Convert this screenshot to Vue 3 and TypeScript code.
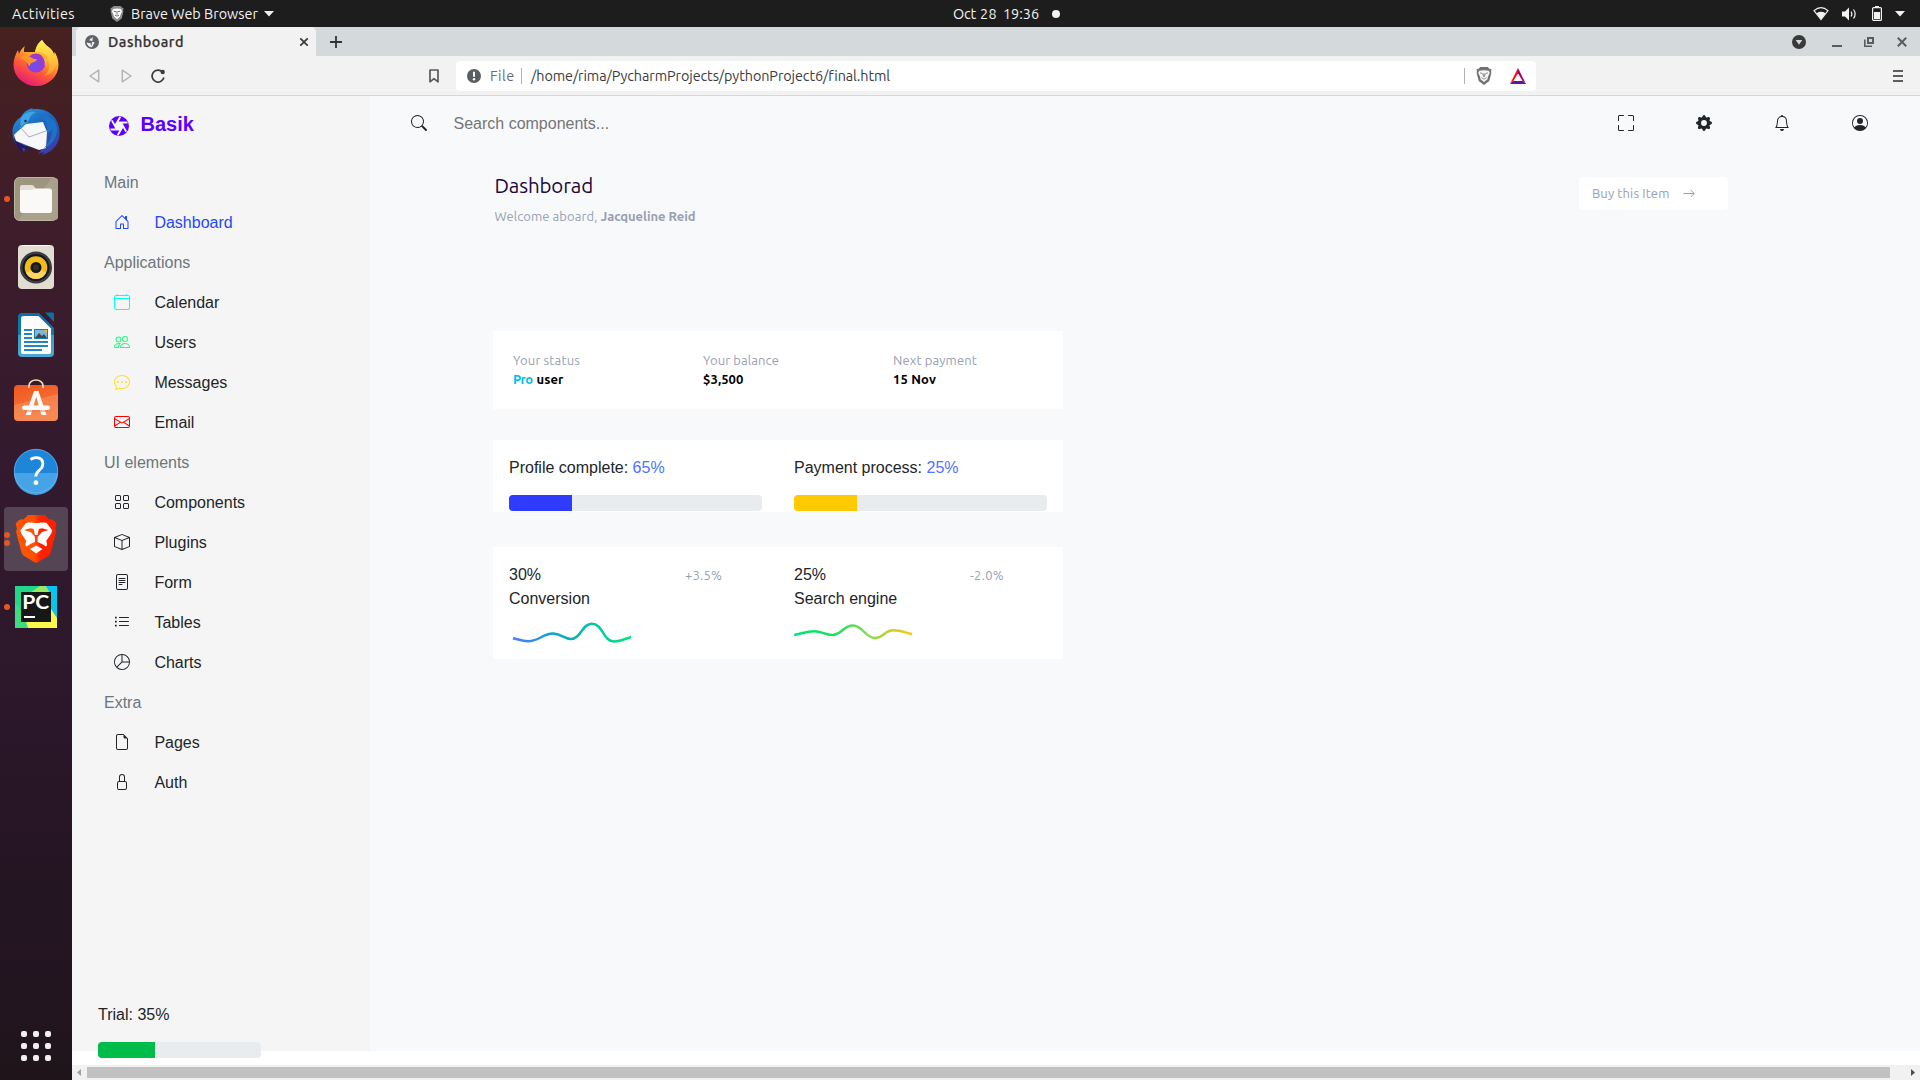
<script setup lang="ts">
interface NavItem {
  label: string
  icon?: string
  color?: string
  heading?: boolean
}

const icons: Record<string, string> = {
  house: 'M8.354 1.146a.5.5 0 0 0-.708 0l-6 6A.5.5 0 0 0 1.5 7.5v7a.5.5 0 0 0 .5.5h4.5a.5.5 0 0 0 .5-.5v-4h2v4a.5.5 0 0 0 .5.5H14a.5.5 0 0 0 .5-.5v-7a.5.5 0 0 0-.146-.354L13 5.793V2.5a.5.5 0 0 0-.5-.5h-1a.5.5 0 0 0-.5.5v1.293L8.354 1.146zM2.5 14V7.707l5.5-5.5 5.5 5.5V14H10v-4a.5.5 0 0 0-.5-.5h-3a.5.5 0 0 0-.5.5v4H2.5z',
  calendar: 'M3.5 0a.5.5 0 0 1 .5.5V1h8V.5a.5.5 0 0 1 1 0V1h1a2 2 0 0 1 2 2v11a2 2 0 0 1-2 2H2a2 2 0 0 1-2-2V3a2 2 0 0 1 2-2h1V.5a.5.5 0 0 1 .5-.5zM1 5v9a1 1 0 0 0 1 1h12a1 1 0 0 0 1-1V5H1zM2 2a1 1 0 0 0-1 1v1h14V3a1 1 0 0 0-1-1H2z',
  people: 'M15 14s1 0 1-1-1-4-5-4-5 3-5 4 1 1 1 1h8zm-7.978-1A.261.261 0 0 1 7 12.996c.001-.264.167-1.03.76-1.72C8.312 10.629 9.282 10 11 10c1.717 0 2.687.63 3.24 1.276.593.69.758 1.457.76 1.72l-.008.002a.274.274 0 0 1-.014.002H7.022zM11 7a2 2 0 1 0 0-4 2 2 0 0 0 0 4zm3-2a3 3 0 1 1-6 0 3 3 0 0 1 6 0zM6.936 9.28a5.88 5.88 0 0 0-1.23-.247A7.35 7.35 0 0 0 5 9c-4 0-5 3-5 4 0 .667.333 1 1 1h4.216A2.238 2.238 0 0 1 5 13c0-1.01.377-2.042 1.09-2.904.243-.294.526-.569.846-.816zM4.92 10A5.493 5.493 0 0 0 4 13H1c0-.26.164-1.03.76-1.724.545-.636 1.492-1.256 3.16-1.275zM1.5 5.5a3 3 0 1 1 6 0 3 3 0 0 1-6 0zm3-2a2 2 0 1 0 0 4 2 2 0 0 0 0-4z',
  chat: 'M5 8a1 1 0 1 1-2 0 1 1 0 0 1 2 0zm4 0a1 1 0 1 1-2 0 1 1 0 0 1 2 0zm3 1a1 1 0 1 0 0-2 1 1 0 0 0 0 2zM2.165 15.803l.02-.004c1.83-.363 2.948-.842 3.468-1.105A9.06 9.06 0 0 0 8 15c4.418 0 8-3.134 8-7s-3.582-7-8-7-8 3.134-8 7c0 1.76.743 3.37 1.97 4.6a10.437 10.437 0 0 1-.524 2.318l-.003.011a10.722 10.722 0 0 1-.244.637c-.079.186.074.394.273.362a21.673 21.673 0 0 0 .693-.125zm.8-3.108a1 1 0 0 0-.287-.801C1.618 10.83 1 9.468 1 8c0-3.192 3.004-6 7-6s7 2.808 7 6c0 3.193-3.004 6-7 6a8.06 8.06 0 0 1-2.088-.272 1 1 0 0 0-.711.074c-.387.196-1.24.57-2.634.893a10.97 10.97 0 0 0 .398-2z',
  envelope: 'M0 4a2 2 0 0 1 2-2h12a2 2 0 0 1 2 2v8a2 2 0 0 1-2 2H2a2 2 0 0 1-2-2V4Zm2-1a1 1 0 0 0-1 1v.217l7 4.2 7-4.2V4a1 1 0 0 0-1-1H2Zm13 2.383-4.708 2.825L15 11.105V5.383Zm-.034 6.876-5.64-3.471L8 9.583l-1.326-.795-5.64 3.47A1 1 0 0 0 2 13h12a1 1 0 0 0 .966-.741ZM1 11.105l4.708-2.897L1 5.383v5.722Z',
  grid: 'M1 2.5A1.5 1.5 0 0 1 2.5 1h3A1.5 1.5 0 0 1 7 2.5v3A1.5 1.5 0 0 1 5.5 7h-3A1.5 1.5 0 0 1 1 5.5v-3zM2.5 2a.5.5 0 0 0-.5.5v3a.5.5 0 0 0 .5.5h3a.5.5 0 0 0 .5-.5v-3a.5.5 0 0 0-.5-.5h-3zm6.5.5A1.5 1.5 0 0 1 10.5 1h3A1.5 1.5 0 0 1 15 2.5v3A1.5 1.5 0 0 1 13.5 7h-3A1.5 1.5 0 0 1 9 5.5v-3zm1.5-.5a.5.5 0 0 0-.5.5v3a.5.5 0 0 0 .5.5h3a.5.5 0 0 0 .5-.5v-3a.5.5 0 0 0-.5-.5h-3zM1 10.5A1.5 1.5 0 0 1 2.5 9h3A1.5 1.5 0 0 1 7 10.5v3A1.5 1.5 0 0 1 5.5 15h-3A1.5 1.5 0 0 1 1 13.5v-3zm1.5-.5a.5.5 0 0 0-.5.5v3a.5.5 0 0 0 .5.5h3a.5.5 0 0 0 .5-.5v-3a.5.5 0 0 0-.5-.5h-3zm6.5.5A1.5 1.5 0 0 1 10.5 9h3a1.5 1.5 0 0 1 1.5 1.5v3a1.5 1.5 0 0 1-1.5 1.5h-3A1.5 1.5 0 0 1 9 13.5v-3zm1.5-.5a.5.5 0 0 0-.5.5v3a.5.5 0 0 0 .5.5h3a.5.5 0 0 0 .5-.5v-3a.5.5 0 0 0-.5-.5h-3z',
  box: 'M8.186 1.113a.5.5 0 0 0-.372 0L1.846 3.5 8 5.961 14.154 3.5 8.186 1.113zM15 4.239l-6.5 2.6v7.922l6.5-2.6V4.24zM7.5 14.762V6.838L1 4.239v7.923l6.5 2.6zM7.443.184a1.5 1.5 0 0 1 1.114 0l7.129 2.852A.5.5 0 0 1 16 3.5v8.662a1 1 0 0 1-.629.928l-7.185 2.874a.5.5 0 0 1-.372 0L.63 13.09a1 1 0 0 1-.63-.928V3.5a.5.5 0 0 1 .314-.464L7.443.184z',
  form: 'M5 4a.5.5 0 0 0 0 1h6a.5.5 0 0 0 0-1H5zm0 2a.5.5 0 0 0 0 1h6a.5.5 0 0 0 0-1H5zm0 2a.5.5 0 0 0 0 1h6a.5.5 0 0 0 0-1H5zm0 2a.5.5 0 0 0 0 1h3a.5.5 0 0 0 0-1H5zM2 2a2 2 0 0 1 2-2h8a2 2 0 0 1 2 2v12a2 2 0 0 1-2 2H4a2 2 0 0 1-2-2V2zm2-1a1 1 0 0 0-1 1v12a1 1 0 0 0 1 1h8a1 1 0 0 0 1-1V2a1 1 0 0 0-1-1H4z',
  list: 'M5 3h9.5a.5.5 0 0 1 0 1H5zM5 7h9.5a.5.5 0 0 1 0 1H5zM5 11h9.5a.5.5 0 0 1 0 1H5zM1 2.7h1.7v1.7H1zM1 6.7h1.7v1.7H1zM1 10.7h1.7v1.7H1z',
  pie: 'M7.5 1.018a7 7 0 0 0-4.79 11.566L7.5 7.793V1.018zm1 0V7.5h6.482A7.001 7.001 0 0 0 8.5 1.018zM14.982 8.5H8.207l-4.79 4.79A7 7 0 0 0 14.982 8.5zM0 8a8 8 0 1 1 16 0A8 8 0 0 1 0 8z',
  file: 'M14 4.5V14a2 2 0 0 1-2 2H4a2 2 0 0 1-2-2V2a2 2 0 0 1 2-2h5.5L14 4.5zm-3 0A1.5 1.5 0 0 1 9.5 3V1H4a1 1 0 0 0-1 1v12a1 1 0 0 0 1 1h8a1 1 0 0 0 1-1V4.5h-2z',
  lock: 'M8 1a2 2 0 0 1 2 2v4H6V3a2 2 0 0 1 2-2zm3 6V3a3 3 0 0 0-6 0v4a2 2 0 0 0-2 2v5a2 2 0 0 0 2 2h6a2 2 0 0 0 2-2V9a2 2 0 0 0-2-2zM5 8h6a1 1 0 0 1 1 1v5a1 1 0 0 1-1 1H5a1 1 0 0 1-1-1V9a1 1 0 0 1 1-1z',
  search: 'M11.742 10.344a6.5 6.5 0 1 0-1.397 1.398h-.001c.03.04.062.078.098.115l3.85 3.85a1 1 0 0 0 1.415-1.414l-3.85-3.85a1.007 1.007 0 0 0-.115-.1zM12 6.5a5.5 5.5 0 1 1-11 0 5.5 5.5 0 0 1 11 0z',
  fullscreen: 'M1.5 1a.5.5 0 0 0-.5.5v4a.5.5 0 0 1-1 0v-4A1.5 1.5 0 0 1 1.5 0h4a.5.5 0 0 1 0 1h-4zM10 .5a.5.5 0 0 1 .5-.5h4A1.5 1.5 0 0 1 16 1.5v4a.5.5 0 0 1-1 0v-4a.5.5 0 0 0-.5-.5h-4a.5.5 0 0 1-.5-.5zM.5 10a.5.5 0 0 1 .5.5v4a.5.5 0 0 0 .5.5h4a.5.5 0 0 1 0 1h-4A1.5 1.5 0 0 1 0 14.5v-4a.5.5 0 0 1 .5-.5zm15 0a.5.5 0 0 1 .5.5v4a1.5 1.5 0 0 1-1.5 1.5h-4a.5.5 0 0 1 0-1h4a.5.5 0 0 0 .5-.5v-4a.5.5 0 0 1 .5-.5z',
  gear: 'M9.405 1.05c-.413-1.4-2.397-1.4-2.81 0l-.1.34a1.464 1.464 0 0 1-2.105.872l-.31-.17c-1.283-.698-2.686.705-1.987 1.987l.169.311c.446.82.023 1.841-.872 2.105l-.34.1c-1.4.413-1.4 2.397 0 2.81l.34.1a1.464 1.464 0 0 1 .872 2.105l-.17.31c-.698 1.283.705 2.686 1.987 1.987l.311-.169a1.464 1.464 0 0 1 2.105.872l.1.34c.413 1.4 2.397 1.4 2.81 0l.1-.34a1.464 1.464 0 0 1 2.105-.872l.31.17c1.283.698 2.686-.705 1.987-1.987l-.169-.311a1.464 1.464 0 0 1 .872-2.105l.34-.1c1.4-.413 1.4-2.397 0-2.81l-.34-.1a1.464 1.464 0 0 1-.872-2.105l.17-.31c.698-1.283-.705-2.686-1.987-1.987l-.311.169a1.464 1.464 0 0 1-2.105-.872l-.1-.34zM8 10.93a2.929 2.929 0 1 1 0-5.86 2.929 2.929 0 0 1 0 5.858z',
  bell: 'M8 16a2 2 0 0 0 2-2H6a2 2 0 0 0 2 2zM8 1.918l-.797.161A4.002 4.002 0 0 0 4 6c0 .628-.134 2.197-.459 3.742-.16.767-.376 1.566-.663 2.258h10.244c-.287-.692-.502-1.49-.663-2.258C12.134 8.197 12 6.628 12 6a4.002 4.002 0 0 0-3.203-3.92L8 1.917zM14.22 12c.223.447.481.801.78 1H1c.299-.199.557-.553.78-1C2.68 10.2 3 6.88 3 6c0-2.42 1.72-4.44 4.005-4.901a1 1 0 1 1 1.99 0A5.002 5.002 0 0 1 13 6c0 .88.32 4.2 1.22 6z',
  person: 'M11 6a3 3 0 1 1-6 0 3 3 0 0 1 6 0zM0 8a8 8 0 1 1 16 0A8 8 0 0 1 0 8zm8-7a7 7 0 0 0-5.468 11.37C3.242 11.226 4.805 10 8 10s4.757 1.225 5.468 2.37A7 7 0 0 0 8 1z',
  arrow: 'M1 8a.5.5 0 0 1 .5-.5h11.793l-3.147-3.146a.5.5 0 0 1 .708-.708l4 4a.5.5 0 0 1 0 .708l-4 4a.5.5 0 0 1-.708-.708L13.293 8.5H1.5A.5.5 0 0 1 1 8z',
}

const nav: NavItem[] = [
  { label: 'Main', heading: true },
  { label: 'Dashboard', icon: 'house', color: '#1f47ff' },
  { label: 'Applications', heading: true },
  { label: 'Calendar', icon: 'calendar', color: '#00ffff' },
  { label: 'Users', icon: 'people', color: '#1cff7c' },
  { label: 'Messages', icon: 'chat', color: '#ffdf20' },
  { label: 'Email', icon: 'envelope', color: '#ff0000' },
  { label: 'UI elements', heading: true },
  { label: 'Components', icon: 'grid' },
  { label: 'Plugins', icon: 'box' },
  { label: 'Form', icon: 'form' },
  { label: 'Tables', icon: 'list' },
  { label: 'Charts', icon: 'pie' },
  { label: 'Extra', heading: true },
  { label: 'Pages', icon: 'file' },
  { label: 'Auth', icon: 'lock' },
]

const actions = ['fullscreen', 'gear', 'bell', 'person']

const meters = [
  { label: 'Profile complete:', shown: '65%', fill: 25, color: '#2f3cff' },
  { label: 'Payment process:', shown: '25%', fill: 25, color: '#ffcb00' },
]

// Spreads the letters of an element so that its text takes the given width.
const vFit = {
  mounted(el: HTMLElement, binding: { value: number }) {
    const count = (el.textContent ?? '').length
    const natural = el.getBoundingClientRect().width
    el.style.letterSpacing = `${(binding.value - natural) / count}px`
  },
}
</script>

<template>
  <div class="screen">
    <header class="sysbar">
      <div class="sys-left">
        <span v-fit="63" class="t activities">Activities</span>
        <svg class="sys-lion" width="14" height="16" viewBox="0 0 14 16">
          <path d="M3.5 0h7L12 1.5l1.6.8-.5 2 .4 1-1.8 7.2L7 16l-4.7-3.5L.5 5.3l.4-1-.5-2L2 1.500z" fill="#8d8d8d" />
          <path d="M3 3l4-.6L11 3l1 2.500-1.300 2.700L10 10.500 7 13.300 4 10.500 3.300 8.200 2 5.500z" fill="#fff" />
          <path d="M3.800 5.200l2.200.6M10.200 5.200 8 5.800M7 5v3.500M5 9l2 1.200L9 9" stroke="#555" stroke-width=".9" fill="none" />
        </svg>
        <span v-fit="127" class="t">Brave Web Browser</span>
        <svg class="sys-caret" width="10" height="6" viewBox="0 0 10 6"><path d="M0 0h10L5 5.500z" fill="#f2f2f2" /></svg>
      </div>
      <div class="sys-mid">
        <span v-fit="23" class="t">Oct</span><span v-fit="17" class="t day">28</span><span v-fit="36" class="t clock">19:36</span><i class="dot"></i>
      </div>
      <div class="sys-right">
        <svg width="16" height="14" viewBox="0 0 16 14">
          <path d="M1 3.600Q8-2.200 15 3.600L8 12.500z" fill="none" stroke="#f2f2f2" stroke-width="1.200" />
          <path d="M3.500 6.200Q8 3.500 12.500 6.200L8 12.600z" fill="#f2f2f2" />
        </svg>
        <svg width="16" height="14" viewBox="0 0 16 14">
          <path d="M0 4.500h3L7 .5v13l-4-4H0z" fill="#f2f2f2" />
          <path d="M9 4.500q1.800 2.500 0 5M11.500 2.500q3.300 4.500 0 9" fill="none" stroke="#f2f2f2" stroke-width="1.200" />
        </svg>
        <svg width="10" height="15" viewBox="0 0 10 15">
          <path d="M3 0h4v1.500H3z" fill="#f2f2f2" /><rect x=".6" y="1.600" width="8.800" height="12.800" rx="1" fill="none" stroke="#f2f2f2" stroke-width="1.200" /><path d="M2 6h6v7H2z" fill="#f2f2f2" />
        </svg>
        <svg width="10" height="6" viewBox="0 0 10 6"><path d="M0 0h10L5 5.500z" fill="#f2f2f2" /></svg>
      </div>
    </header>

    <div class="desktop">
      <aside class="dock">
        <div class="slot">
          <svg width="48" height="48" viewBox="0 0 48 48">
            <defs>
              <linearGradient id="fx" x1=".8" y1="0" x2=".3" y2="1"><stop offset="0" stop-color="#fff34a" /><stop offset=".35" stop-color="#ffb52a" /><stop offset=".65" stop-color="#ff5a36" /><stop offset="1" stop-color="#e5177b" /></linearGradient>
              <radialGradient id="fxg" cx=".4" cy=".6"><stop offset="0" stop-color="#6a50f0" /><stop offset="1" stop-color="#9a3ad0" /></radialGradient>
              <linearGradient id="fxy" x1="0" y1="0" x2="0" y2="1"><stop offset="0" stop-color="#fff44f" /><stop offset="1" stop-color="#ff9a30" /></linearGradient>
            </defs>
            <path d="M30 1c-5 4-6 8-7 12L12 13c0-3 0-4 1-6-3 2-5 5-6 8l-1-4C3 16 1.500 21 1.500 26a22.500 21 0 0 0 45 0c0-6-2-10-4-13v4c-1-4-3-7-6-9-4-3-5-5-6.500-7z" fill="url(#fx)" />
            <path d="M30 1c-5 4-6 8-7 12 7 0 13 4 14 11 1 6-2 11-5 13 8-2 14-9 13-17-.5-3-1.500-5-2.500-7v4c-1-4-3-7-6-9-4-3-5-5-6.500-7z" fill="url(#fxy)" />
            <circle cx="24" cy="24" r="9.500" fill="url(#fxg)" />
            <path d="M8 18c4-2 8-2 12 1 2 1.200 4 1 5 1.300-1 2.700-4 3-6 4-1 1-1 2-2 3-1-3-4-6-9-9.300z" fill="#ff9528" />
            <path d="M23 13c4 0 8 1.500 10 5l-4-2c3 3 4.500 7 3.500 11 3-3 4-8 1-11-3-3-7-3-10.500-3z" fill="#ffb035" />
          </svg>
        </div>
        <div class="slot">
          <svg width="48" height="48" viewBox="0 0 48 48">
            <defs><linearGradient id="tb" x1="0" y1="0" x2=".6" y2="1"><stop offset="0" stop-color="#2d9fe0" /><stop offset=".5" stop-color="#1b66bf" /><stop offset="1" stop-color="#3a3fa8" /></linearGradient></defs>
            <path d="M9 10C12 4 17 2 21 1l-1 1.500C34 0 46 9 47.500 23 49 36 41 45 30 48l2-3-6 2 4-5-16-3-2 6C5 41 0 34 .5 24 .8 18 4 13 9 10z" fill="url(#tb)" />
            <path d="M2 31c1 7 5 12 10 15l-2-5 12 3-16-9z" fill="#2a1560" />
            <path d="M5 25 14 17 31 15 35 25 34 41 27 43 4 34 2 28z" fill="#f6f7f9" />
            <path d="M8 20 17 30 34 24" fill="none" stroke="#9a9a9a" stroke-width=".8" />
            <path d="M9 11c4-6 10-7 15-6-4 2-6 4-7 8-2 3-5 4-8 7-1-3-1-6 0-9z" fill="#3fa6e4" />
            <path d="M24 7c8 2 12 9 11 19 3-1 4-2 5-4 0 8-3 14-8 19 8-3 13-10 13-18 0-10-8-16-21-16z" fill="#1d72c8" />
            <circle cx="13.500" cy="14" r="1.200" fill="#123" />
          </svg>
        </div>
        <div class="slot">
          <i class="run"></i>
          <svg width="48" height="48" viewBox="0 0 48 48">
            <rect x="2.500" y="2.500" width="43" height="43" rx="5" fill="#9d957e" stroke="#bbb5a3" /><path d="M40 3h3a3 3 0 0 1 3 3v36a3 3 0 0 1-3 3H6z" fill="#a9a18b" />
            <path d="M8 12q0-2 2-2h10q1.500 0 2.500 2l1.500 2v6H8z" fill="#e3dfd4" /><rect x="8" y="13.500" width="32" height="24.500" rx="2.500" fill="#faf9f7" /><path d="M8 16v-1q0 0 2 0h9q2 0 4-1.500L8 13z" fill="#e3dfd4" />
          </svg>
        </div>
        <div class="slot">
          <svg width="48" height="48" viewBox="0 0 48 48">
            <rect x="6" y="2" width="36" height="44" rx="4" fill="#e2ddd1" /><path d="M10 2.500h28" stroke="#fff" />
            <circle cx="24" cy="24.500" r="16" fill="#3d3d45" /><circle cx="24" cy="24.500" r="13.500" fill="#15161f" /><circle cx="24" cy="24.500" r="11.300" fill="#f2bd18" /><path d="M14 30a11.300 11.300 0 0 0 20 0L24 24.500z" fill="#fbd562" /><circle cx="24" cy="24.500" r="5.500" fill="#15161a" /><circle cx="24" cy="24.500" r="3" fill="#303030" />
          </svg>
        </div>
        <div class="slot">
          <svg width="48" height="48" viewBox="0 0 48 48">
            <defs><linearGradient id="wr" x1="0" y1="0" x2="0" y2="1"><stop offset="0" stop-color="#0d6fa5" /><stop offset=".5" stop-color="#1178b0" /><stop offset=".51" stop-color="#3d99c9" /><stop offset="1" stop-color="#4aa7d6" /></linearGradient></defs>
            <path d="M10 2h17l15 15v25a4 4 0 0 1-4 4H10a4 4 0 0 1-4-4V6a4 4 0 0 1 4-4z" fill="url(#wr)" /><path d="M12 5h14.500L39 17.500V41a2 2 0 0 1-2 2H11a2 2 0 0 1-2-2V7q0-2 3-2z" fill="#fdfdfd" /><path d="M33 1.500h7.500a1.500 1.500 0 0 1 1.500 1.500v8z" fill="#0d6fa5" />
            <path d="M12 19h8M12 23h8M12 27h8M12 31h24M12 35h24M12 39h18" stroke="#2585bd" stroke-width="2" /><rect x="22" y="18" width="14" height="10" fill="#1a7db6" /><path d="M23 19h12v8H23z" fill="#7fb6da" /><path d="m23 27 4-5 3 3 2-2 3 4z" fill="#3e4a50" /><path d="M32 19h3v3z" fill="#f6c61e" />
          </svg>
        </div>
        <div class="slot">
          <svg width="48" height="48" viewBox="0 0 48 48">
            <defs><linearGradient id="sw" x1="0" y1="0" x2=".3" y2="1"><stop offset="0" stop-color="#f0561f" /><stop offset=".5" stop-color="#f4682f" /><stop offset=".52" stop-color="#f58048" /><stop offset="1" stop-color="#f68a55" /></linearGradient></defs>
            <rect x="2" y="6" width="44" height="36" rx="4" fill="url(#sw)" /><path d="M17 9V6.500a7 5.500 0 0 1 14 0V9" fill="none" stroke="#f7dfb6" stroke-width="1.700" />
            <path d="M22 12h4.500l8 24h-5L24.200 18l-5.500 18h-5z" fill="#fffaf4" /><rect x="10" y="26.500" width="28" height="4.600" rx="2.300" fill="#fff" />
            <path d="M12 32h24" stroke="#e9744a" stroke-width="1" />
          </svg>
        </div>
        <div class="slot">
          <svg width="48" height="48" viewBox="0 0 48 48">
            <circle cx="24" cy="24" r="22" fill="#1d86d9" /><path d="M2 26a22 22 0 0 0 44 0z" fill="#46a4e6" /><circle cx="24" cy="24" r="21.700" fill="none" stroke="#6ab8ea" stroke-width=".7" />
            <path d="M18.500 12.500q3-2 6-1.800 6.300.3 6.300 6 0 3.500-3.400 6.500-3.600 3-3.600 6.300" fill="none" stroke="#fff" stroke-width="2.800" /><circle cx="23.900" cy="35.700" r="2.400" fill="#fff" />
          </svg>
        </div>
        <div class="slot">
          <div class="active"></div>
          <i class="run two-a"></i><i class="run two-b"></i>
          <svg width="48" height="48" viewBox="0 0 48 48">
            <defs><linearGradient id="br"><stop offset="0" stop-color="#ff5500" /><stop offset=".45" stop-color="#ff5000" /><stop offset=".62" stop-color="#ff2000" /><stop offset="1" stop-color="#ff2000" /></linearGradient></defs>
            <path d="M16 0h17l4 4.500c4-.8 6 1.500 7.500 5l-1.300 4 1 3-5.500 21c-.6 2-2 3-3.500 4L26 47.300q-1.700 1-3.300 0L13 41.500c-2-1-3-2.500-3.500-4L4 16.500l1-3-1.300-4C5 6 7.500 3.700 11.500 4.500z" fill="url(#br)" />
            <path d="M24.200 8c4 0 6-1 10.500 0l5.500 7.500-1 3-5 7.500c.8 2 1.400 4.500-.2 5.500L30 29l-4.500-2v-5L30 17l6.500-2-6.500-1.800-3.200.8L25.500 20h-2.600L21.600 14l-3.200-.8L12 15l6.500 2L23 22v5l-4.500 2-4 2.500c-1.600-1-1-3.500-.2-5.500l-5-7.500-1-3L14 8c4.500-1 6.200 0 10.200 0z" fill="#fff" />
            <path d="M24.200 30.500 30.500 34 24.200 38.500 18 34z" fill="#fff" />
          </svg>
        </div>
        <div class="slot">
          <i class="run"></i>
          <svg width="48" height="48" viewBox="0 0 48 48">
            <rect x="3" y="3" width="42" height="42" fill="#21d789" /><path d="M31 3h14v25L38 14z" fill="#07c3f2" /><path d="m36 9 9 0v26l-8-5z" fill="#0bc5e8" /><path d="M19 9 28 3h6l5 9v16l6 7v10H15L3 40z" fill="#9be962" /><path d="M39 26 45 35v10H15l-2-9z" fill="#fcf84a" /><path d="M3 20 12 32l4 13H3z" fill="#3ddb82" />
            <rect x="9" y="9" width="30" height="30" fill="#171717" /><text x="10.300" y="25.800" font-family="Lato" font-size="18.500" font-weight="700" fill="#fff" textLength="27" lengthAdjust="spacingAndGlyphs">PC</text><path d="M12 34h11" stroke="#fff" stroke-width="2" />
          </svg>
        </div>
        <div class="apps"><i v-for="n in 9" :key="n"></i></div>
      </aside>

      <section class="window">
        <div class="tabs">
          <div class="tab">
            <svg width="14" height="14" viewBox="0 0 14 14"><circle cx="7" cy="7" r="7" fill="#5f6368" /><path d="M8 1.500c-1 1.500-1 2-3 2.200C4.500 5 5 5.200 4 5.500c1.500.2 3 0 3.500 1.500 1 .3 2-.2 2 .8-.3 1.500-1.500 1.200-1.500 3L6.500 12.300C4 12 2 10 1.600 7.500 3 8 4 8 5.500 8 5.500 9.500 6 10 6.500 11z" fill="#f2f2f2" /></svg>
            <span v-fit="76" class="t tab-title">Dashboard</span>
            <svg class="tab-close" width="10" height="10" viewBox="0 0 10 10"><path d="m1.300 1.300 7.400 7.400m0-7.400L1.300 8.700" stroke="#3c3c3c" stroke-width="1.800" /></svg>
          </div>
          <svg class="plus" width="12" height="12" viewBox="0 0 12 12"><path d="M6 0v12M0 6h12" stroke="#333" stroke-width="1.800" /></svg>
          <div class="controls">
            <svg width="14" height="14" viewBox="0 0 14 14"><circle cx="7" cy="7" r="7" fill="#3a3a3a" /><path d="M3.700 5h6.600L7 9.800z" fill="#d4d9dc" /></svg>
            <svg width="10" height="10" viewBox="0 0 10 10"><path d="M0 9h10" stroke="#5a5d60" stroke-width="2" /></svg>
            <svg width="10" height="10" viewBox="0 0 10 10"><path d="M4 1h5v5H4z" fill="none" stroke="#5a5d60" stroke-width="2" /><path d="M.8 2.500V9.200H8" fill="none" stroke="#5a5d60" stroke-width="1.600" /></svg>
            <svg width="10" height="10" viewBox="0 0 10 10"><path d="m.8.800 8.400 8.400m0-8.400L.8 9.200" stroke="#5a5d60" stroke-width="2" /></svg>
          </div>
        </div>
        <div class="toolbar">
          <svg class="back" width="11" height="14" viewBox="0 0 11 14"><path d="M9.700 1.200v11.600L1 7z" fill="none" stroke="#b4b4b4" stroke-width="1.500" stroke-linejoin="round" /></svg>
          <svg class="fwd" width="11" height="14" viewBox="0 0 11 14"><path d="M1.300 1.200v11.600L10 7z" fill="none" stroke="#b4b4b4" stroke-width="1.500" stroke-linejoin="round" /></svg>
          <svg class="reload" width="14" height="14" viewBox="0 0 14 14"><path d="M12.900 8.500A6 6 0 1 1 11.500 3" fill="none" stroke="#3c3c3c" stroke-width="1.700" /><circle cx="11.700" cy="3" r="2.200" fill="#3c3c3c" /></svg>
          <svg class="bookmark" width="10" height="14" viewBox="0 0 10 14"><path d="M1 1h8v11.800L5 9.600l-4 3.200z" fill="none" stroke="#5a5a5a" stroke-width="1.700" stroke-linejoin="round" /></svg>
          <div class="address">
            <svg width="14" height="14" viewBox="0 0 14 14"><circle cx="7" cy="7" r="7" fill="#5a5d62" /><path d="M7 2.800v5" stroke="#fff" stroke-width="2" /><circle cx="7" cy="10.300" r="1.200" fill="#fff" /></svg>
            <span v-fit="24.500" class="t file">File</span>
            <i class="bar"></i>
            <span v-fit="358.500" class="t url">/home/rima/PycharmProjects/pythonProject6/final.html</span>
            <i class="bar right"></i>
            <svg class="shield" width="16" height="18" viewBox="0 0 16 18"><path d="M4.200 0h7.600l1.500 1.700 2.200.6-.5 2.500.4 1L13.300 14 8 18l-5.300-4L.6 5.800l.4-1L.5 2.300l2.200-.6z" fill="#727272" /><path d="M3.200 3.700 8 3.200l4.800.5 1 2.300-1.800 3.500-.5 2.700L8 15l-3.500-2.800L4 9.500 2.200 6z" fill="#f6f6f6" /><path d="M4 5.800l2.500.8L8 10l1.500-3.400L12 5.800M5.500 10.700 8 12.200l2.500-1.500M8 6v4" fill="none" stroke="#888" stroke-width=".9" /></svg>
            <svg class="bat" width="16" height="16" viewBox="0 0 18 16" preserveAspectRatio="none"><path d="M9 0v5.200L3.800 13 0 16z" fill="#ff0a0a" /><path d="M9 0v5.200l5.200 7.800L18 16z" fill="#a3006b" /><path d="M0 16 3.800 13h10.400L18 16z" fill="#6a0f9c" /></svg>
          </div>
          <svg class="menu" width="10" height="12" viewBox="0 0 10 12"><path d="M0 1h10M0 6h10M0 11h10" stroke="#5f5f5f" stroke-width="2" /></svg>
        </div>

        <div class="page">
          <nav class="sidebar">
            <div class="brand">
              <svg width="20" height="20" viewBox="0 0 20 20">
                <circle cx="10" cy="10" r="10" fill="#5b00ff" />
                <path d="M8 6.500h4l2 3.500-2 3.500H8L6 10z" fill="#f5f5f5" />
                <path d="M8 6.500h10.500M12 6.500l5.200 9.100M14 10l-5.300 9.200M12 13.500H1.500M8 13.500 2.800 4.400M6 10 11.300.800" stroke="#f5f5f5" stroke-width="1.900" />
              </svg>
              <span>Basik</span>
            </div>
            <ul>
              <li v-for="item in nav" :key="item.label" :class="{ heading: item.heading, current: item.icon === 'house' }">
                <svg v-if="item.icon" width="16" height="16" viewBox="0 0 16 16"><path :d="icons[item.icon]" :fill="item.color ?? '#212529'" fill-rule="evenodd" /></svg>
                <span>{{ item.label }}</span>
              </li>
            </ul>
            <div class="trial">
              <p>Trial: 35%</p>
              <div class="meter"><div style="width: 35%; background: #00bc49"></div></div>
            </div>
          </nav>
          <main>
            <div class="topbar">
              <svg width="16" height="16" viewBox="0 0 16 16"><path :d="icons.search" fill="#212529" /></svg>
              <span class="query">Search components...</span>
              <div class="actions">
                <svg v-for="a in actions" :key="a" width="16" height="16" viewBox="0 0 16 16"><path :d="icons[a]" fill="#212529" fill-rule="evenodd" /></svg>
              </div>
            </div>
            <div class="title-row">
              <div>
                <h1><span v-fit="98.500">Dashborad</span></h1>
                <p class="welcome"><span v-fit="106" class="pre">Welcome aboard, </span><b v-fit="95">Jacqueline Reid</b></p>
              </div>
              <div class="buy">
                <span v-fit="77.500">Buy this Item</span>
                <svg width="14" height="13" viewBox="0 0 16 16"><path :d="icons.arrow" fill="#98a0b8" /></svg>
              </div>
            </div>
            <div class="card status">
              <div><p><span v-fit="67">Your status</span></p><b><span v-fit="19.500" class="pro">Pro</span><span v-fit="27" class="user">user</span></b></div>
              <div><p><span v-fit="76">Your balance</span></p><b><span v-fit="40.500">$3,500</span></b></div>
              <div><p><span v-fit="84">Next payment</span></p><b><span v-fit="43">15 Nov</span></b></div>
            </div>
            <div class="card meters">
              <div v-for="m in meters" :key="m.label">
                <p>{{ m.label }} <em>{{ m.shown }}</em></p>
                <div class="meter"><div :style="{ width: m.fill + '%', background: m.color }"></div></div>
              </div>
            </div>
            <div class="card stats">
              <div>
                <div class="stat-top"><span>30%</span><small><span v-fit="37">+3.5%</span></small></div>
                <p>Conversion</p>
                <svg width="130" height="24" viewBox="0 0 130 24">
                  <defs><linearGradient id="s1" gradientUnits="userSpaceOnUse" x1="3" y1="0" x2="123" y2="0"><stop offset="0" stop-color="#4d7cff" /><stop offset=".35" stop-color="#12a0cc" /><stop offset=".7" stop-color="#00c9a7" /><stop offset="1" stop-color="#00e676" /></linearGradient></defs>
                  <path d="M3.900 16.200C10 17.500 13 19.200 19 19.200C31 19.200 33 11.500 44 11.500C52 11.500 55 17 62 17C72 17 73 1.700 82.700 1.700C94 1.700 94 19.500 105 19.500C111 19.500 116 17 122.200 15" fill="none" stroke="url(#s1)" stroke-width="2.500" />
                </svg>
              </div>
              <div>
                <div class="stat-top"><span>25%</span><small><span v-fit="34">-2.0%</span></small></div>
                <p>Search engine</p>
                <svg width="130" height="24" viewBox="0 0 130 24">
                  <defs><linearGradient id="s2" gradientUnits="userSpaceOnUse" x1="0" y1="0" x2="118" y2="0"><stop offset="0" stop-color="#00e676" /><stop offset=".32" stop-color="#12e062" /><stop offset=".6" stop-color="#7cdb52" /><stop offset="1" stop-color="#ffc80a" /></linearGradient></defs>
                  <path d="M.2 13C8 11.500 13 9.200 20 9.200C28 9.200 31 13 38 13C48 13 49 3.500 59 3.500C69 3.500 71 16 81 16C89 16 91 8.300 99 8.300C106 8.300 111 10.500 118.200 12.200" fill="none" stroke="url(#s2)" stroke-width="2.500" />
                </svg>
              </div>
            </div>
          </main>
        </div>
        <div class="scroll">
          <svg width="4" height="7" viewBox="0 0 4 7"><path d="M4 0v7L0 3.500z" fill="#a0a0a0" /></svg>
          <div class="thumb"></div>
          <svg width="4" height="7" viewBox="0 0 4 7"><path d="M0 0v7l4-3.500z" fill="#4d4d4d" /></svg>
        </div>
      </section>
    </div>
  </div>
</template>

<style>
body { margin: 0; overflow: hidden; }
</style>

<style scoped>
* { box-sizing: border-box; }
p, h1, ul { margin: 0; padding: 0; }
svg { display: block; flex: none; overflow: visible; }
span, b { white-space: pre; }
.screen { width: 1920px; height: 1080px; display: flex; flex-direction: column; overflow: hidden; font: 16px/24px "Liberation Sans", Arial, sans-serif; color: #212529; background: #fff; }
.t { font-family: Ubuntu, "Noto Sans", sans-serif; font-size: 14.400px; line-height: 20px; }
.sysbar { height: 27px; flex: none; background: #1d1d1d; color: #f2f2f2; display: flex; align-items: center; justify-content: space-between; position: relative; }
.sys-left { display: flex; align-items: center; padding-left: 12px; }
.sys-lion { margin: 0 7px 0 35px; }
.sys-caret { margin-left: 6px; }
.sys-mid { display: flex; align-items: center; position: absolute; left: 953px; }
.day { margin-left: 4px; }
.clock { margin-left: 6px; }
.dot { width: 8px; height: 8px; border-radius: 50%; background: #f2f2f2; margin-left: 13px; }
.sys-right { display: flex; align-items: center; padding-right: 15px; margin-left: auto; }
.sys-right svg:nth-child(2) { margin-left: 13px; }
.sys-right svg:nth-child(3) { margin-left: 14px; }
.sys-right svg:nth-child(4) { margin-left: 13px; }
.desktop { flex: 1; display: flex; min-height: 0; }
.dock { width: 72px; padding-top: 2px; display: flex; flex-direction: column; background: linear-gradient(#47201f 0%, #3f1d2a 18%, #341a2e 40%, #2c172b 62%, #241522 84%, #20141b 100%); }
.slot { height: 68px; display: flex; align-items: center; justify-content: center; position: relative; }
.slot svg { position: relative; }
.run { position: absolute; left: 4px; top: 31px; width: 6px; height: 6px; border-radius: 50%; background: #e95420; z-index: 1; }
.two-a { top: 27px; }
.two-b { top: 35px; }
.active { position: absolute; left: 4px; top: 2px; width: 64px; height: 64px; border-radius: 4px; background: #554454; }
.apps { margin: auto auto 19px 21px; display: grid; grid-template-columns: repeat(3, 6px); gap: 6px; }
.apps i { height: 6px; border-radius: 2px; background: #f0eeee; }
.window { flex: 1; display: flex; flex-direction: column; min-width: 0; }
.tabs { height: 29px; flex: none; background: #d4d9dc; display: flex; align-items: center; padding-left: 4px; }
.tab { width: 240px; height: 29px; background: #f2f2f2; border-radius: 5px 5px 0 0; display: flex; align-items: center; padding: 1px 7px 0 9px; }
.tab-title { margin-left: 9px; font-weight: 500; color: #333; -webkit-text-stroke: .25px #333; }
.tab-close { margin-left: auto; }
.plus { margin-left: 14px; }
.controls { margin-left: auto; padding-right: 13px; display: flex; align-items: center; }
.controls svg:nth-child(2) { margin-left: 26px; }
.controls svg:nth-child(3) { margin-left: 22px; }
.controls svg:nth-child(4) { margin-left: 23px; }
.toolbar { height: 40px; flex: none; background: #f2f2f2; border-bottom: 1px solid #d4d7d9; display: flex; align-items: center; padding: 1px 17px 0 17px; }
.fwd { margin-left: 21px; }
.reload { margin-left: 19px; }
.bookmark { margin-left: 264px; }
.address { width: 1080px; height: 30px; margin-left: 17px; padding: 0 10px 0 11px; background: #fff; border-radius: 4px; display: flex; align-items: center; }
.file { margin-left: 9px; color: #6a6d70; }
.bar { width: 1px; height: 16px; background: #b0b3b6; margin-left: 6px; }
.url { margin-left: 9.500px; color: #3b3b3d; }
.bar.right { margin-left: auto; }
.shield { margin-left: 11px; }
.bat { margin-left: 18px; }
.menu { margin-left: auto; }
.page { height: 955px; flex: none; display: flex; }
.sidebar { width: 298px; flex: none; background: #f5f5f5; display: flex; flex-direction: column; }
.brand { display: flex; align-items: center; height: 30px; margin: 13px 0 0 37px; gap: 11.500px; font-size: 20px; font-weight: 700; color: #5b00ff; }
.brand svg { margin-top: 4px; }
.sidebar ul { list-style: none; margin-top: 23px; }
.sidebar li { height: 40px; display: flex; align-items: center; padding-left: 42px; }
.sidebar li.heading { padding-left: 32px; color: #6c757d; }
.sidebar li span { margin-left: 24.400px; padding-top: 2px; }
.sidebar li.heading span { margin-left: 0; }
.sidebar li.current { color: #1f47ff; }
.trial { margin: 201px 0 -7px 26px; }
.trial .meter { width: 163px; margin-top: 15px; }
.meter { height: 16px; background: #e9ecef; border-radius: 4px; overflow: hidden; }
.meter div { height: 100%; }
main { flex: 1; background: #f8f9fb; display: flex; flex-direction: column; align-items: flex-start; }
.topbar { align-self: stretch; height: 54px; padding: 0 52px 0 41px; display: flex; align-items: center; }
.query { margin-left: 26.500px; padding-top: 2px; color: #757575; }
.actions { margin-left: auto; display: flex; gap: 62px; }
.title-row { align-self: stretch; margin: 22px 192px 0 124.500px; display: flex; justify-content: space-between; align-items: flex-start; font-family: Ubuntu, "Noto Sans", sans-serif; }
h1 { font-size: 20.500px; font-weight: 400; line-height: 28px; color: #1b0a3c; }
.welcome { font-size: 13px; line-height: 20px; color: #98a0b3; margin-top: 6px; display: flex; }
.welcome b { font-weight: 600; }
.buy { width: 149px; height: 33px; margin-top: 5px; padding: 0 0 1px 13px; background: #fff; border-radius: 4px; display: flex; align-items: center; gap: 12px; font-size: 13px; color: #98a0b3; }
.card { width: 570px; margin-left: 123px; background: #fff; display: flex; }
.status { height: 78px; margin-top: 105px; padding-top: 20px; font: 13px/19px Ubuntu, "Noto Sans", sans-serif; color: #98a0b3; }
.status > div { flex: 1; padding-left: 20px; }
.status b { display: flex; color: #000; }
.pro { color: #00c0e4; }
.user { margin-left: 4px; }
.meters { height: 72px; margin-top: 31px; }
.meters > div { flex: 1; padding: 16px 16px 0; }
.meters .meter { margin-top: 15px; }
em { font-style: normal; color: #4d73ff; }
.stats { height: 112px; margin-top: 35px; }
.stats > div { flex: 1; padding: 16px 16px 0; }
.stat-top { display: flex; }
.stat-top > span { width: 176px; }
.stat-top small { font: 13px/24px Ubuntu, "Noto Sans", sans-serif; height: 24px; color: #98a0b3; }
.stats svg { margin-top: 11px; }
.scroll { height: 15px; margin-top: 14px; background: #f1f1f1; display: flex; align-items: center; padding: 0 5px; justify-content: space-between; }
.thumb { height: 11px; width: 1803px; margin-right: 15px; background: #c1c1c1; }
</style>
